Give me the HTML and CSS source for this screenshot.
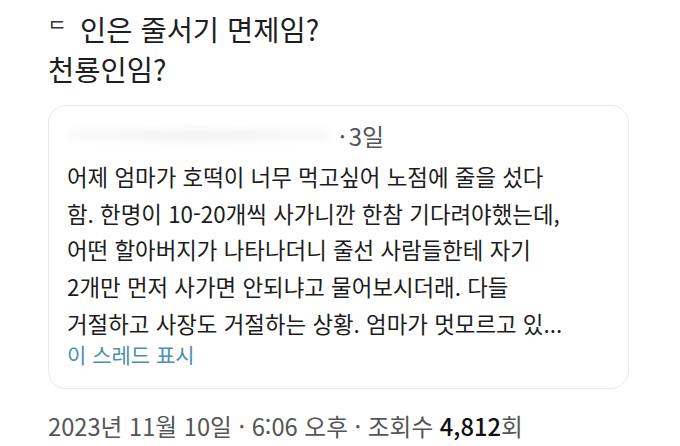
FILE: index.html
```html
<!DOCTYPE html>
<html lang="ko">
<head>
<meta charset="utf-8">
<link rel="stylesheet" href="styles.css">
</head>
<body>
<div class="page">
  <div class="title">
    <div class="line1"><span class="cut">ᄃ</span><span class="t1">인은 줄서기 면제임?</span></div>
    <div class="line2">천룡인임?</div>
  </div>
  <div class="card">
    <div class="head"><span class="blur"></span><span class="meta"><span class="dot">·</span>3일</span></div>
    <div class="body">어제 엄마가 호떡이 너무 먹고싶어 노점에 줄을 섰다<br>함. 한명이 10-20개씩 사가니깐 한참 기다려야했는데,<br>어떤 할아버지가 나타나더니 줄선 사람들한테 자기<br>2개만 먼저 사가면 안되냐고 물어보시더래. 다들<br>거절하고 사장도 거절하는 상황. 엄마가 멋모르고 있...</div>
    <div class="thread">이 스레드 표시</div>
  </div>
  <div class="foot">2023년 11월 10일 · 6:06 오후 · 조회수 <b>4,812</b>회</div>
</div>
</body>
</html>
```

FILE: styles.css
```css
html, body { margin: 0; padding: 0; background: #fff; }
body { font-family: "Noto Sans CJK KR", "Noto Sans", sans-serif; color: #1a1a1a; }
.page { width: 680px; height: 446px; overflow: hidden; padding: 9px 0 0 48px; box-sizing: border-box; }
.title { font-size: 28.5px; line-height: 40px; color: #1e1e1e; }
.line1 { display: flex; align-items: center; height: 40px; }
.cut { display: inline-block; color: #333; font-size: 20px; line-height: 20px; width: 32px; }
.line2 { height: 40px; }
.card { margin-top: 16px; width: 581px; height: 284px; box-sizing: border-box; border: 1.5px solid #e8e8e8; border-radius: 18px; padding: 14px 18px 0 18px; }
.head { display: flex; align-items: center; height: 30px; }
.blur { display: inline-block; width: 262px; height: 14px; background: linear-gradient(90deg, #fafafa, #f4f4f4, #fafafa); border-radius: 7px; filter: blur(3px); }
.meta { font-size: 24px; color: #555; margin-left: 10px; }
.dot { margin-right: 3px; }
.body { font-size: 22.4px; line-height: 36.7px; color: #1c1c1c; margin-top: 8px; white-space: nowrap; }
.thread { font-size: 21px; color: #4d8fb0; margin-top: 0; line-height: 24px; }
.foot { margin-top: 22px; font-size: 23.7px; line-height: 30px; color: #555; }
.foot b { color: #111; font-weight: 500; }
```
